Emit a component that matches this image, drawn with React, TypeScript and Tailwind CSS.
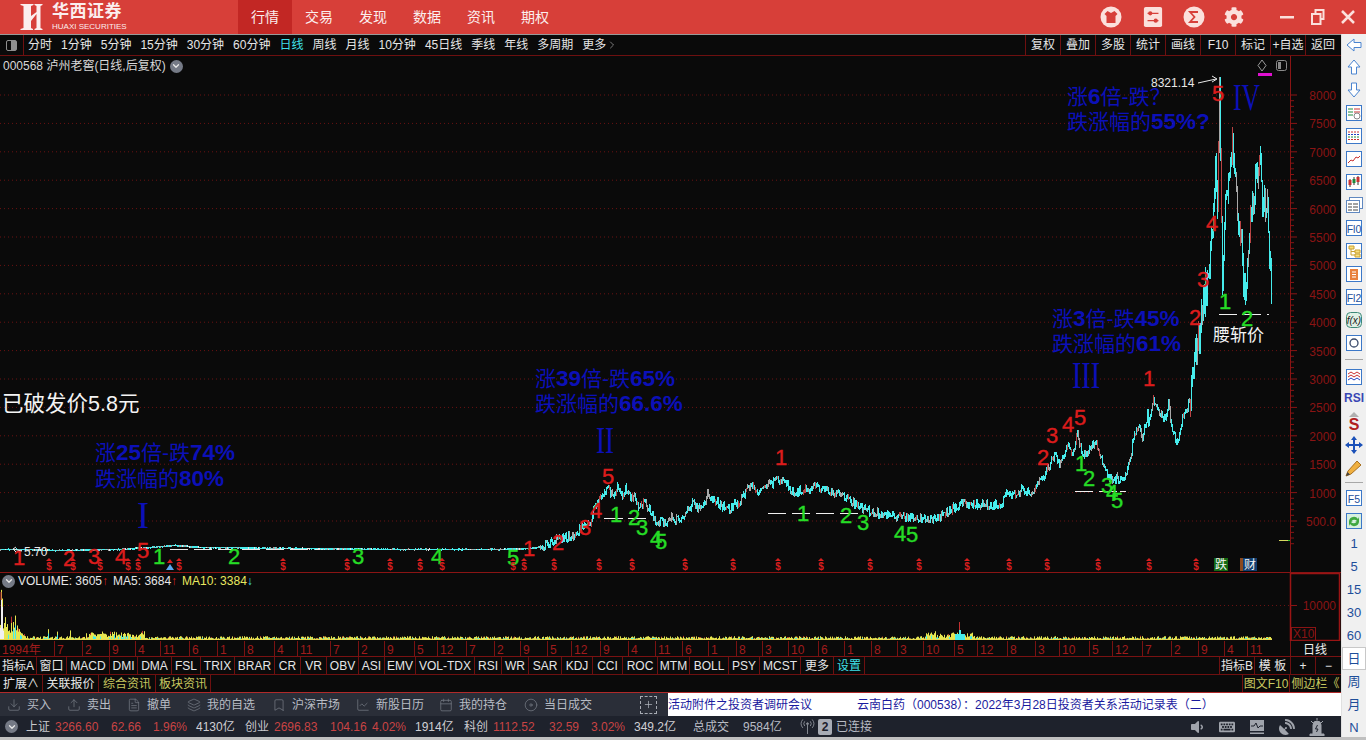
import React from 'react';
import { Download, Upload, FileText, Layers, Bookmark, LineChart, Calendar, Disc, Plus, ChevronDown, ChevronRight } from 'lucide-react';
import { FaCog, FaVolumeDown, FaKeyboard, FaSatelliteDish } from 'react-icons/fa';

// seeded random so that every render draws the same chart
let seed = 7;
const rnd = () => {
    seed = (seed * 16807) % 2147483647;
    return seed / 2147483647;
};

const pricePoints: [number, number][] = [
    [0, 549], [20, 549], [50, 550], [120, 549], [150, 547], [175, 545], [200, 547], [300, 548], [400, 549], [500, 549], [530, 548], [543, 546],
    [557, 538], [575, 535], [582, 525], [590, 525], [593, 507], [600, 497], [608, 488], [613, 497], [617, 487], [622, 497], [625, 485], [630, 498],
    [633, 495], [638, 507], [643, 502], [650, 510], [655, 523], [662, 520], [667, 523], [670, 517], [675, 520], [682, 517], [692, 503], [697, 508],
    [702, 510], [707, 493], [713, 498], [720, 505], [730, 508], [740, 500], [750, 483], [757, 492], [767, 485], [783, 478], [793, 492], [800, 490],
    [815, 486], [830, 490], [845, 498], [870, 512], [900, 516], [935, 519], [960, 503], [1000, 505], [1005, 493], [1017, 495], [1020, 489], [1032, 492],
    [1042, 478], [1047, 468], [1055, 455], [1060, 465], [1067, 445], [1072, 453], [1077, 433], [1082, 457], [1088, 450], [1095, 440], [1100, 457],
    [1105, 470], [1112, 483], [1115, 478], [1123, 478], [1130, 460], [1133, 437], [1138, 425], [1142, 440], [1147, 413], [1148, 427], [1153, 398],
    [1157, 412], [1165, 420], [1168, 403], [1172, 433], [1177, 442], [1183, 413], [1190, 400], [1193, 365], [1195, 353], [1200, 330], [1203, 303],
    [1207, 277], [1210, 257], [1213, 220], [1215, 160], [1217, 203], [1219, 77], [1220, 150], [1222, 277], [1225, 207], [1230, 167], [1232, 135],
    [1237, 213], [1242, 260], [1243, 297], [1247, 270], [1250, 213], [1253, 197], [1257, 170], [1259, 152], [1262, 203], [1267, 210], [1271, 283],
];

const priceAt = (x: number) => {
    for (let i = 1; i < pricePoints.length; i++) {
        const [x1, y1] = pricePoints[i];
        const [x0, y0] = pricePoints[i - 1];
        if (x <= x1) return y0 + ((y1 - y0) * (x - x0)) / (x1 - x0);
    }
    return 283;
};

const buildPrice = () => {
    const paths = { cyan: '', red: '', gray: '', white: '' };
    let prev = priceAt(0);
    for (let x = 0; x <= 1271; x++) {
        const jitter = x < 540 ? 0 : x < 1190 ? (rnd() - 0.5) * 8 : (rnd() - 0.5) * 30;
        const y = priceAt(x) + jitter;
        const amp = x < 540 ? 0.6 : x < 1190 ? 2 : 9;
        const top = Math.max(77, Math.round(Math.min(prev, y) - rnd() * amp));
        const bottom = Math.round(Math.max(prev, y) + rnd() * amp) + 1;
        prev = y;
        const r = rnd();
        const d = `M${x + 0.5} ${top}V${bottom}`;
        if (x < 540 && r < 0.12) paths.white += d;
        else if (r < 0.1) paths.red += d;
        else if (r < 0.3) paths.gray += d;
        else paths.cyan += d;
    }
    return paths;
};
const price = buildPrice();

const volumeEnvelope = (x: number) => {
    if (x < 3) return 46;
    if (x < 26) return 4 + (30 - x) * 0.7 + (x > 10 && x < 18 ? 10 : 0);
    if (x === 48 || x === 57 || x === 70) return 14;
    if (x > 85 && x < 145) return 8;
    if (x === 935 || x === 960) return x === 960 ? 20 : 10;
    if (x > 925 && x < 975) return 7;
    return 3.5;
};

const buildVolume = () => {
    const paths = { yellow: '', cyan: '', red: '', white: '' };
    for (let x = 0; x <= 1271; x++) {
        const h = volumeEnvelope(x) * (0.3 + rnd() * 0.8);
        const r = rnd();
        paths.yellow += `M${x + 0.5} 640V${640 - h}`;
        if (r < 0.3) paths.cyan += `M${x + 0.5} 640V${640 - h * 0.6}`;
        if (r > 0.9) paths.red += `M${x + 0.5} ${640 - h * 0.8}V${640 - h * 1.1}`;
        if (x < 4) paths.white += `M${x + 0.5} 640V${640 - h * 0.8}`;
    }
    return paths;
};
const volume = buildVolume();

const tools = ['分时', '1分钟', '5分钟', '15分钟', '30分钟', '60分钟', '日线', '周线', '月线', '10分钟', '45日线', '季线', '年线', '多周期'];
const toolsRight = ['复权', '叠加', '多股', '统计', '画线', 'F10', '标记', '+自选', '返回'];
const nav = ['行情', '交易', '发现', '数据', '资讯', '期权'];
const indexTabs = ['指标A', '窗口', 'MACD', 'DMI', 'DMA', 'FSL', 'TRIX', 'BRAR', 'CR', 'VR', 'OBV', 'ASI', 'EMV', 'VOL-TDX', 'RSI', 'WR', 'SAR', 'KDJ', 'CCI', 'ROC', 'MTM', 'BOLL', 'PSY', 'MCST', '更多'];

const priceLabels = ['8000', '7500', '7000', '6500', '6000', '5500', '5000', '4500', '4000', '3500', '3000', '2500', '2000', '1500', '1000', '500.0'];
const dollarX = [49, 73, 100, 128, 138, 179, 283, 347, 390, 420, 442, 513, 524, 554, 599, 632, 685, 733, 778, 821, 870, 919, 967, 1009, 1047, 1098, 1149, 1196];

const redNums: [string, number, number][] = [
    ['1', 19, 565], ['2', 69, 566], ['3', 94, 564], ['4', 121, 564], ['5', 143, 558], ['1', 529, 556], ['2', 558, 550], ['3', 585, 535], ['4', 596, 518], ['5', 608, 484],
    ['1', 781, 465], ['2', 1043, 465], ['3', 1052, 443], ['4', 1068, 432], ['5', 1080, 425], ['1', 1149, 386], ['2', 1195, 325], ['3', 1203, 287], ['4', 1212, 231], ['5', 1218, 101],
];
const greenNums: [string, number, number][] = [
    ['1', 159, 564], ['2', 234, 564], ['3', 358, 564], ['4', 437, 564], ['5', 513, 565], ['1', 616, 522], ['2', 634, 525], ['3', 642, 535], ['4', 656, 546], ['5', 661, 549],
    ['1', 803, 521], ['2', 846, 523], ['3', 863, 530], ['4', 900, 541], ['5', 912, 542], ['1', 1081, 471], ['2', 1089, 486], ['3', 1107, 493], ['4', 1112, 500], ['5', 1117, 508],
    ['1', 1225, 309], ['2', 1247, 326],
];
const whiteDashes: [number, number, number][] = [
    [604, 623, 518], [628, 646, 518], [768, 786, 513], [792, 810, 513], [816, 834, 513], [840, 858, 513],
    [1075, 1093, 491], [1099, 1117, 491], [1120, 1126, 491], [1219, 1237, 314], [1242, 1261, 314], [1267, 1269, 314],
];
const axisMonths: [string, number][] = [
    ['1994年', 2], ['7', 57], ['2', 85], ['9', 112], ['4', 138], ['11', 163], ['6', 192], ['1', 220], ['8', 247], ['4', 277], ['11', 300], ['7', 333], ['2', 361], ['9', 387],
    ['5', 417], ['12', 440], ['7', 469], ['2', 497], ['9', 523], ['5', 550], ['12', 574], ['9', 603], ['4', 631], ['11', 658], ['6', 685], ['1', 711], ['8', 739], ['3', 765],
    ['10', 791], ['6', 821], ['1', 847], ['8', 874], ['3', 900], ['10', 926], ['5', 957], ['12', 980], ['8', 1010], ['3', 1038], ['10', 1062], ['5', 1092], ['12', 1115], ['7', 1145],
    ['2', 1174], ['9', 1201], ['4', 1227], ['11', 1250],
];

const BlueNote = ({ x, y, children }: { x: number; y: number; children: React.ReactNode }) => (
    <text x={x} y={y} fontSize="21" fill="#0c10b8">{children}</text>
);

const Strong = ({ children }: { children: string }) => (
    <tspan fontWeight="bold" fontSize="22.5">{children}</tspan>
);

const Roman = ({ x, y, w, children }: { x: number; y: number; w: number; children: string }) => (
    <text x={x} y={y} fontSize="38" fill="#0c10b8" textLength={w} lengthAdjust="spacingAndGlyphs" fontFamily="'Liberation Serif', serif">{children}</text>
);

const PriceChart = () => (
    <svg viewBox="0 56 1341 516" className="block w-[1341px] h-[516px]">
        {priceLabels.map((label, i) => {
            const y = 95 + i * 28.4;
            return (
                <g key={label}>
                    <line x1="0" x2="1290" y1={y} y2={y} stroke="#6a1212" strokeDasharray="1 3" />
                    <line x1="1290" x2="1297" y1={y} y2={y} stroke="#8a1414" />
                    <text x="1336" y={y + 5} fontSize="12" fill="#8a1414" textAnchor="end">{label}</text>
                    {[1, 2, 3, 4].map((k) => (
                        <line key={k} x1="1290" x2="1294" y1={y + (k * 28.4) / 5} y2={y + (k * 28.4) / 5} stroke="#8a1414" />
                    ))}
                </g>
            );
        })}
        <line x1="1290.5" x2="1290.5" y1="56" y2="572" stroke="#8a1414" />

        <line x1="170" x2="500" y1="549.5" y2="549.5" stroke="#e8e8e8" strokeDasharray="18 6" />
        <path d={price.cyan} stroke="#46ecec" fill="none" />
        <path d={price.gray} stroke="#a8a8a8" fill="none" />
        <path d={price.red} stroke="#b84444" fill="none" />
        <path d={price.white} stroke="#e8e8e8" fill="none" />
        {whiteDashes.map(([x1, x2, y]) => (
            <line key={`${x1}-${y}`} x1={x1} x2={x2} y1={y + 0.5} y2={y + 0.5} stroke="#f0f0f0" />
        ))}
        <path d="M1279 540.5h9" stroke="#d8d860" />
        <path d="M1288 540.5h2" stroke="#30c030" />

        {redNums.map(([n, x, y]) => (
            <text key={`r${x}`} x={x} y={y} fontSize="22" fill="#dc1c1c" stroke="#dc1c1c" strokeWidth="0.4" textAnchor="middle">{n}</text>
        ))}
        {greenNums.map(([n, x, y]) => (
            <text key={`g${x}`} x={x} y={y} fontSize="22" fill="#26dc26" stroke="#26dc26" strokeWidth="0.4" textAnchor="middle">{n}</text>
        ))}

        <text x="2" y="411" fontSize="21.5" fill="#f4f4f4">已破发价5.8元</text>
        <BlueNote x={95} y={460}>涨<Strong>25</Strong>倍-跌<Strong>74%</Strong></BlueNote>
        <BlueNote x={95} y={486}>跌涨幅的<Strong>80%</Strong></BlueNote>
        <BlueNote x={535} y={386}>涨<Strong>39</Strong>倍-跌<Strong>65%</Strong></BlueNote>
        <BlueNote x={535} y={411}>跌涨幅的<Strong>66.6%</Strong></BlueNote>
        <BlueNote x={1052} y={326}>涨<Strong>3</Strong>倍-跌<Strong>45%</Strong></BlueNote>
        <BlueNote x={1052} y={351}>跌涨幅的<Strong>61%</Strong></BlueNote>
        <BlueNote x={1067} y={104}>涨<Strong>6</Strong>倍-跌？</BlueNote>
        <BlueNote x={1067} y={129}>跌涨幅的<Strong>55%?</Strong></BlueNote>
        <Roman x={137} y={528} w={12}>I</Roman>
        <Roman x={596} y={453} w={18}>II</Roman>
        <Roman x={1072} y={388} w={28}>III</Roman>
        <Roman x={1233} y={110} w={27}>IV</Roman>
        <text x="1213" y="341" fontSize="17" fill="#f4f4f4">腰斩价</text>

        <text x="1151" y="87" fontSize="12" fill="#e8e8e8">8321.14</text>
        <path d="M1198 83l18-4M1212 76l5 3-5 3" stroke="#e8e8e8" fill="none" />
        <text x="24" y="556" fontSize="12" fill="#e8e8e8">5.70</text>
        <path d="M22 551l-9-2M16 547l-3 2 3 3" stroke="#e8e8e8" fill="none" />

        {dollarX.map((x) => (
            <g key={x}>
                <path d={`M${x - 3} 561l3-3 3 3z`} fill="#d81e1e" />
                <text x={x} y="570" fontSize="10" fontWeight="bold" fill="#d81e1e" textAnchor="middle">$</text>
            </g>
        ))}
        <path d="M170 559l3 4h-6z" fill="#d81e1e" />
        <path d="M170 564l4 6h-8z" fill="#5aa8f0" />

        <rect x="1214" y="558" width="14" height="13" fill="#146a14" />
        <text x="1221" y="569" fontSize="12" fill="#f4f4f4" textAnchor="middle">跌</text>
        <rect x="1240" y="558" width="4" height="13" fill="#8a4a20" />
        <rect x="1243" y="558" width="14" height="13" fill="#123e70" />
        <text x="1250" y="569" fontSize="12" fill="#f4f4f4" textAnchor="middle">财</text>

        <path d="M1262 60l4 5.500-4 5.500-4-5.500z" stroke="#9a9a9a" fill="none" />
        <rect x="1258" y="73" width="14" height="3" fill="#e010d0" />
        <rect x="1276.500" y="60.500" width="10" height="10" rx="2" stroke="#8a8a8a" fill="none" />
        <rect x="1278" y="62" width="3" height="7" fill="#8a8a8a" />
    </svg>
);

const VolumeChart = () => (
    <svg viewBox="0 573 1341 68" className="block w-[1341px] h-[68px]">
        <line x1="0" x2="1290" y1="605.500" y2="605.500" stroke="#6a1212" strokeDasharray="1 3" />
        <path d={volume.yellow} stroke="#e6e650" fill="none" />
        <path d={volume.cyan} stroke="#46ecec" fill="none" />
        <path d={volume.red} stroke="#c03030" fill="none" />
        <path d={volume.white} stroke="#f0f0f0" fill="none" />
        <path d="M0 639.500H1271" stroke="#e8d850" />
        <path d="M1 592V600" stroke="#c03030" />
        <path d="M959.500 622V632" stroke="#c03030" />
        <path d="M959 630V640h2V630zM955 634v6h10v-6z" fill="#46ecec" />
        <rect x="1290.500" y="573.500" width="49" height="67" fill="none" stroke="#9a1414" strokeWidth="1.500" />
        <line x1="1290" x2="1297" y1="605.500" y2="605.500" stroke="#8a1414" />
        <text x="1336" y="610" fontSize="12" fill="#8a1414" textAnchor="end">10000</text>
        <rect x="1291.500" y="627.500" width="24" height="13" fill="none" stroke="#8a1414" />
        <text x="1293" y="638" fontSize="12" fill="#8a1414">X10</text>
    </svg>
);

const TimeAxis = () => (
    <svg viewBox="0 641 1341 16" className="block w-[1341px] h-[16px]">
        {axisMonths.map(([m, x]) => (
            <g key={`${m}-${x}`}>
                <line x1={x - 2.500} x2={x - 2.500} y1="641" y2="656" stroke="#7a1212" />
                <text x={x} y="654" fontSize="12" fill="#a01c1c">{m}</text>
            </g>
        ))}
        <line x1="0" x2="1341" y1="656.500" y2="656.500" stroke="#7a1212" />
        <line x1="1290.500" x2="1290.500" y1="641" y2="657" stroke="#7a1212" />
        <text x="1315" y="654" fontSize="12" fill="#f0f0f0" textAnchor="middle">日线</text>
    </svg>
);

const TopBar = () => (
    <header className="h-[35px] flex items-stretch bg-[#d73f39] border-b border-[#9a9a9a] text-[#fbeeee]">
        <div className="w-[238px] pl-[20px] flex items-center gap-[9px]">
            <svg viewBox="0 0 22 26" className="w-[23px] h-[26px]">
                <path d="M0 0h13v1l-2.500 1V12L16 8V2l-2-1V0h8v1l-2 1v22l2 1v1h-8v-1l2-1V10l-5.500 7v7l2 1v1H0v-1l3-1V2L0 1z" fill="#fbeeee" />
            </svg>
            <div className="flex flex-col leading-none">
                <span className="text-[17px] font-bold tracking-[0.5px] leading-[18px]">华西证券</span>
                <span className="text-[8px] leading-[10px] mt-[1px]">HUAXI SECURITIES</span>
            </div>
        </div>
        {nav.map((item, i) => (
            <div key={item} className={`w-[54px] flex items-center justify-center text-sm ${i === 0 ? 'bg-[#c22724]' : ''}`}>{item}</div>
        ))}
        <div className="ml-auto flex items-center">
            <svg viewBox="0 0 22 22" className="w-[22px] h-[22px] mr-[21px]">
                <circle cx="11" cy="11" r="10.500" fill="#fbe0dc" />
                <path d="M7.500 5l3.500 2 3.500-2 3 3-2 2v7h-9v-7l-2-2z" fill="#d73f39" />
            </svg>
            <svg viewBox="0 0 22 22" className="w-[20px] h-[24px] mr-[20px]">
                <rect x="1" y="0" width="20" height="22" rx="2" fill="#fbe0dc" />
                <path d="M5 7h12M5 15h12" stroke="#d73f39" strokeWidth="1.500" />
                <circle cx="8" cy="7" r="2.300" fill="#d73f39" />
                <circle cx="14" cy="15" r="2.300" fill="#d73f39" />
            </svg>
            <svg viewBox="0 0 22 22" className="w-[22px] h-[22px] mr-[19px]">
                <circle cx="11" cy="11" r="10.500" fill="#fbe0dc" />
                <path d="M15 6H7l4.500 5L7 16h8" stroke="#d73f39" strokeWidth="1.800" fill="none" />
            </svg>
            <FaCog className="w-[20px] h-[20px] mr-[36px] text-[#fbe0dc]" />
            <svg viewBox="0 0 14 4" className="w-[14px] h-[4px] mr-[17px]">
                <rect width="14" height="2.500" y="1" fill="#fbe0dc" />
            </svg>
            <svg viewBox="0 0 14 16" className="w-[14px] h-[16px] mr-[16px]">
                <path d="M4.500 4V1h8v9h-3" stroke="#fbe0dc" strokeWidth="2" fill="none" />
                <rect x="1" y="5" width="8.500" height="10" stroke="#fbe0dc" strokeWidth="2" fill="none" />
            </svg>
            <svg viewBox="0 0 14 14" className="w-[14px] h-[14px] mr-[11px]">
                <path d="M1 1l12 12M13 1L1 13" stroke="#fbe0dc" strokeWidth="2.500" />
            </svg>
        </div>
    </header>
);

const ToolBar = () => (
    <div className="h-[21px] flex items-stretch bg-[#0a0a0a] border-b border-[#6e1010] text-xs text-[#e6e6e6]">
        <div className="w-[24px] flex items-center justify-center border-r border-[#6e1010]">
            <span className="w-[11px] h-[11px] border border-[#8f8f8f] rounded-[2px] flex justify-end">
                <span className="w-[5px] bg-[#8f8f8f]" />
            </span>
        </div>
        <div className="flex items-center gap-[9px] pl-[4px]">
            {tools.map((t) => (
                <span key={t} className={t === '日线' ? 'text-[#40e0e8]' : ''}>{t}</span>
            ))}
            <span className="flex items-center">更多<ChevronRight className="w-[12px] h-[12px]" strokeWidth={1} /></span>
        </div>
        <div className="ml-auto flex">
            {toolsRight.map((t) => (
                <div key={t} className="w-[35px] border-l border-[#6e1010] flex items-center justify-center whitespace-nowrap">{t}</div>
            ))}
            <div className="w-[1px]" />
        </div>
    </div>
);

const Circle = () => (
    <span className="w-[13px] h-[13px] rounded-full bg-[#757a86] flex items-center justify-center">
        <ChevronDown className="w-[10px] h-[10px] text-[#e8e8e8]" strokeWidth={3} />
    </span>
);

const VolumeLegend = () => (
    <div className="absolute left-[2px] top-[1px] h-[14px] flex items-center text-xs text-[#e6e6e6] whitespace-nowrap">
        <Circle />
        <span className="ml-[3px]">VOLUME: 3605</span><span className="text-[#d81e1e] leading-none">↑</span>
        <span className="ml-[5px]">MA5: 3684</span><span className="text-[#d81e1e] leading-none">↑</span>
        <span className="ml-[5px] text-[#e8e860]">MA10: 3384</span><span className="text-[#40e0e8] leading-none">↓</span>
    </div>
);

const IndexTabs = () => (
    <div className="h-[18px] flex bg-[#0a0a0a] border-b border-[#6e1010] text-xs text-[#e6e6e6]">
        <div className="grid grid-cols-[37px_30px_43px_28px_34px_29px_34px_40px_26px_26px_32px_26px_31px_59px_27px_27px_33px_31px_30px_35px_32px_39px_31px_41px_33px]">
            {indexTabs.map((t) => (
                <div key={t} className="flex items-center justify-center border-r border-[#6e1010] whitespace-nowrap">{t}</div>
            ))}
        </div>
        <div className="w-[31px] flex items-center justify-center border-r border-[#6e1010] text-[#40e0e8]">设置</div>
        <div className="ml-[354px] w-[36px] flex items-center justify-center border-x border-[#6e1010]">指标B</div>
        <div className="w-[36px] flex items-center justify-center border-r border-[#6e1010]">模 板</div>
        <div className="w-[25px] flex items-center justify-center border-r border-[#6e1010]">+</div>
        <div className="w-[25px] flex items-center justify-center">−</div>
    </div>
);

const InfoTabs = () => (
    <div className="h-[18px] flex bg-[#0a0a0a] border-b border-[#b02a2a] text-xs text-[#e6e6e6]">
        <div className="w-[43px] flex items-center justify-center border-r border-[#6e1010]">扩展∧</div>
        <div className="w-[56px] flex items-center justify-center border-r border-[#6e1010]">关联报价</div>
        <div className="w-[57px] flex items-center justify-center border-r border-[#6e1010] text-[#c8c860]">综合资讯</div>
        <div className="w-[55px] flex items-center justify-center border-r border-[#6e1010] text-[#c8c860]">板块资讯</div>
        <div className="ml-auto w-[48px] flex items-center justify-center border-x border-[#6e1010] text-[#c8c860]">图文F10</div>
        <div className="w-[51px] flex items-center justify-center text-[#c8c860] whitespace-nowrap">侧边栏《</div>
    </div>
);

const bottomTools = [
    { label: '买入', icon: Download, width: 'w-[60px]' },
    { label: '卖出', icon: Upload, width: 'w-[60px]' },
    { label: '撤单', icon: FileText, width: 'w-[60px]' },
    { label: '我的自选', icon: Layers, width: 'w-[85px]' },
    { label: '沪深市场', icon: Bookmark, width: 'w-[84px]' },
    { label: '新股日历', icon: LineChart, width: 'w-[83px]' },
    { label: '我的持仓', icon: Calendar, width: 'w-[85px]' },
    { label: '当日成交', icon: Disc, width: 'w-[116px]' },
];

const ActionBar = () => (
    <div className="h-[23px] flex bg-[#2a2e38] text-xs text-[#b8bcc4]">
        <div className="w-[668px] flex items-center pl-[7px]">
            {bottomTools.map(({ label, icon: Icon, width }) => (
                <div key={label} className={`${width} flex items-center gap-[6px] shrink-0`}>
                    <Icon className="w-[14px] h-[14px] text-[#777c86]" strokeWidth={1.25} />
                    <span>{label}</span>
                </div>
            ))}
            <span className="w-[17px] h-[18px] border border-dashed border-[#a8acb4] flex items-center justify-center shrink-0">
                <Plus className="w-[11px] h-[11px]" strokeWidth={1.5} />
            </span>
        </div>
        <div className="flex-1 bg-white text-[#1a1a9e] flex items-center whitespace-nowrap overflow-hidden">
            <span>活动附件之投资者调研会议</span>
            <span className="ml-[45px]">云南白药（000538）：2022年3月28日投资者关系活动记录表（二）</span>
        </div>
    </div>
);

const quotes = [
    { name: '上证', vals: ['3266.60', '62.66', '1.96%'], amount: '4130亿' },
    { name: '创业', vals: ['2696.83', '104.16', '4.02%'], amount: '1914亿' },
    { name: '科创', vals: ['1112.52', '32.59', '3.02%'], amount: '349.2亿' },
];

const StatusBar = () => (
    <div className="h-[21px] flex items-center bg-[#1e222c] text-xs text-[#b8bcc4] whitespace-nowrap">
        <span className="ml-[5px] -mr-[1px]"><Circle /></span>
        {quotes.map((q) => (
            <div key={q.name} className="flex items-center ml-[9px]">
                <span className="w-[29px] text-[#c8c8cc]">{q.name}</span>
                <span className="text-[#c94444] w-[56px]">{q.vals[0]}</span>
                <span className="text-[#c94444] w-[42px]">{q.vals[1]}</span>
                <span className="text-[#c94444] w-[43px]">{q.vals[2]}</span>
                <span className="text-[#d0d0d4] w-[40px]">{q.amount}</span>
            </div>
        ))}
        <span className="ml-[19px] w-[50px]">总成交</span>
        <span className="w-[50px]">9584亿</span>
        <svg viewBox="0 0 16 18" className="w-[15px] h-[17px] ml-[7px] text-[#8a8e96]" fill="none" stroke="currentColor">
            <circle cx="8" cy="6" r="1" fill="currentColor" />
            <path d="M8 7v10M5 3.500a4 4 0 0 0 0 5M11 3.500a4 4 0 0 1 0 5M3 1.500a7 7 0 0 0 0 9M13 1.500a7 7 0 0 1 0 9" />
        </svg>
        <span className="ml-[3px] w-[14px] h-[16px] bg-[#a8acb4] rounded-[2px] text-[#1e222c] flex items-center justify-center font-bold">2</span>
        <span className="ml-[4px]">已连接</span>
        <div className="ml-auto flex items-center text-[#a0a4ac] mr-[16px] gap-[14px]">
            <FaVolumeDown className="w-[16px] h-[16px]" />
            <FaKeyboard className="w-[16px] h-[16px]" />
            <svg viewBox="0 0 16 16" className="w-[16px] h-[16px]" fill="none">
                <rect x="1" y="1" width="14" height="11" fill="currentColor" />
                <path d="M2 7h3l2-3 2 5 2-2h3" stroke="#1e222c" />
                <rect x="1" y="13.500" width="14" height="1.500" fill="currentColor" />
            </svg>
            <FaSatelliteDish className="w-[16px] h-[16px]" />
            <svg viewBox="0 0 16 18" className="w-[16px] h-[18px]">
                <path d="M4 16V7a4 4 0 0 1 8 0v9zM1 16h14v2H1zM8 0v2M2 3l2 2M14 3l-2 2" fill="currentColor" stroke="currentColor" />
                <path d="M8.500 7L6.500 11h2.500l-1.500 3" stroke="#1e222c" fill="none" />
            </svg>
        </div>
    </div>
);

const Box = ({ children }: { children: React.ReactNode }) => (
    <svg viewBox="0 0 18 18" className="w-[18px] h-[18px]">
        <rect x="1.500" y="1.500" width="15" height="15" fill="#fff" stroke="#3c78c8" />
        {children}
    </svg>
);

const TextBox = ({ label }: { label: string }) => (
    <Box><text x="9" y="13.500" fontSize="10.500" textAnchor="middle" fill="#1e4e9a">{label}</text></Box>
);

const Arrow = ({ d }: { d: string }) => (
    <svg viewBox="0 0 18 18" className="w-[18px] h-[18px]">
        <path d={d} fill="#fff" stroke="#4a84d0" />
    </svg>
);

const upperIcons: React.ReactNode[] = [
    <Arrow d="M9 16l6-7h-3.500V2h-5v7H3z" />,
    <Box><path d="M3 5h5M3 8h5M3 11h5" stroke="#1c8a3c" /><path d="M9 5h6M9 8h6" stroke="#c83030" /><circle cx="12" cy="12" r="3" fill="none" stroke="#888" /></Box>,
    <Box><path d="M3 5h12" stroke="#c83030" strokeDasharray="2 1" /><path d="M3 7.500h12" stroke="#2040c0" strokeDasharray="2 1" /><path d="M3 10h12" stroke="#1c8a3c" strokeDasharray="2 1" /><path d="M3 12.500h12" stroke="#c83030" strokeDasharray="2 1" /></Box>,
    <Box><path d="M3 13l3-3 2 1 3-4 2 1 2-2" stroke="#c83030" fill="none" /></Box>,
    <Box><path d="M5 6v8M9 4v8M13 3v9" stroke="#333" /><rect x="3.500" y="7" width="3" height="5" fill="#c83030" /><rect x="7.500" y="6" width="3" height="4" fill="#1c8a3c" /><rect x="11.500" y="4" width="3" height="5" fill="#c83030" /></Box>,
    <svg viewBox="0 0 18 18" className="w-[18px] h-[18px]"><rect x="4.500" y="1.500" width="13" height="11" fill="#fff" stroke="#6088c0" /><rect x="1.500" y="4.500" width="13" height="12" fill="#fff" stroke="#6088c0" /><path d="M3 8h4M8 8h5M3 11h4M8 11h5M3 14h4M8 14h5" stroke="#444" /></svg>,
    <TextBox label="Fl0" />,
    <Box><path d="M4 4h5v3H4zM10 8h5v3h-5zM10 12h5v3h-5z" fill="#f8e080" stroke="#c8a030" /><path d="M6 7v6h4M6 9.500h4" stroke="#c8a030" fill="none" /></Box>,
    <Box><rect x="5" y="4" width="8" height="11" fill="#e8803c" /><path d="M7 7h4M7 9.500h4M7 12h4" stroke="#fff" /></Box>,
    <TextBox label="Fl2" />,
    <svg viewBox="0 0 18 18" className="w-[18px] h-[18px]"><rect x="1.500" y="1.500" width="15" height="15" rx="4" fill="#dff0e6" stroke="#3c8878" /><text x="9" y="13" fontSize="10" fontStyle="italic" textAnchor="middle" fill="#222">f(x)</text></svg>,
    <Box><circle cx="9" cy="9" r="4" fill="none" stroke="#3a4a6a" strokeWidth="1.300" /></Box>,
];

const PencilIcon = () => (
    <svg viewBox="0 0 18 18" className="w-[18px] h-[18px]"><path d="M3 12L12 2l4 4-10 9-5 2z" fill="#f0b040" stroke="#a87020" /><path d="M1 17l1.500-4 2.500 2.500z" fill="#444" /></svg>
);

const finalIcons: React.ReactNode[] = [
    <TextBox label="F5" />,
    <Box><rect x="2" y="2" width="14" height="14" fill="#d8f0e0" /><path d="M4 9a5 5 0 0 1 9-2l1-2v5h-4l2-1a3.500 3.500 0 0 0-6 1zM14 10a5 5 0 0 1-9 2l-1 2v-5h4l-2 1a3.500 3.500 0 0 0 6-1z" fill="#40a840" /></Box>,
];

const railRows = ['1', '5', '15', '30', '60', '日', '周', '月', 'N'];
const Row = ({ children }: { children: React.ReactNode }) => (
    <div className="h-[23px] flex items-center justify-center shrink-0">{children}</div>
);

const SideRail = () => (
    <aside className="w-[25px] flex flex-col items-stretch bg-[#f0f0f0] border-l border-[#e0e0e0] text-[#1e4e9a] -mt-[1px]">
        <div className="h-[21px] flex items-center justify-center shrink-0">
            <Arrow d="M2 9l7-6v3.500h7v5H9V15z" />
        </div>
        <Row><Arrow d="M9 2l6 7h-3.500v7h-5V9H3z" /></Row>
        {upperIcons.map((icon, i) => (
            <Row key={i}>{icon}</Row>
        ))}
        <div className="h-[11px] flex items-center shrink-0 px-[3px]"><div className="h-[1px] w-full bg-[#a8a8a8]" /></div>
        <Row>
            <Box><path d="M3 6l3-2 3 2 3-2 3 2M3 9l3-2 3 2 3-2 3 2" stroke="#c83030" fill="none" /><path d="M3 12l3-2 3 2 3-2 3 2" stroke="#2040c0" fill="none" /></Box>
        </Row>
        <div className="h-[19px] mb-[3px] flex items-center justify-center shrink-0">
            <span className="text-[12px] font-bold text-[#3a46b4] leading-none">RSI</span>
        </div>
        <Row>
            <svg viewBox="0 0 18 20" className="w-[18px] h-[20px]"><path d="M9 0l5 5H4z" fill="#b0b0b0" /><text x="9" y="18" fontSize="16" fontWeight="bold" textAnchor="middle" fill="#b02020">S</text></svg>
        </Row>
        <Row>
            <svg viewBox="0 0 18 18" className="w-[18px] h-[18px]"><path d="M9 0l3 4h-2v4h4V6l4 3-4 3v-2h-4v4h2l-3 4-3-4h2v-4H4v2L0 9l4-3v2h4V4H6z" fill="#1a50b8" /></svg>
        </Row>
        <Row><PencilIcon /></Row>
        <div className="h-[7px] flex items-center shrink-0 px-[3px]"><div className="h-[1px] w-full bg-[#a8a8a8]" /></div>
        {finalIcons.map((icon, i) => (
            <Row key={i}>{icon}</Row>
        ))}
        {railRows.map((t) => (
            <div key={t} className={`h-[23px] flex items-center justify-center shrink-0 text-[13px] ${t === '日' ? 'bg-white border border-[#c8c8c8]' : ''}`}>{t}</div>
        ))}
    </aside>
);

const App: React.FC = () => {
    return (
        <div className="w-[1366px] h-[740px] overflow-hidden flex flex-col bg-[#c0c0c0] [font-family:'Liberation_Sans','Noto_Sans_CJK_SC',sans-serif]">
            <TopBar />
            <div className="h-[702px] flex">
                <main className="w-[1341px] flex flex-col bg-[#0a0a0a]">
                    <ToolBar />
                    <div className="relative h-[517px] border-b border-[#8a1414]">
                        <PriceChart />
                        <div className="absolute left-[3px] top-[2px] flex items-center gap-[4px] text-xs text-[#d8d8d8] whitespace-nowrap">
                            <span>000568 泸州老窖(日线,后复权)</span>
                            <Circle />
                        </div>
                    </div>
                    <div className="relative">
                        <VolumeChart />
                        <VolumeLegend />
                    </div>
                    <TimeAxis />
                    <IndexTabs />
                    <InfoTabs />
                    <ActionBar />
                    <StatusBar />
                </main>
                <SideRail />
            </div>
        </div>
    );
};

export default App;
